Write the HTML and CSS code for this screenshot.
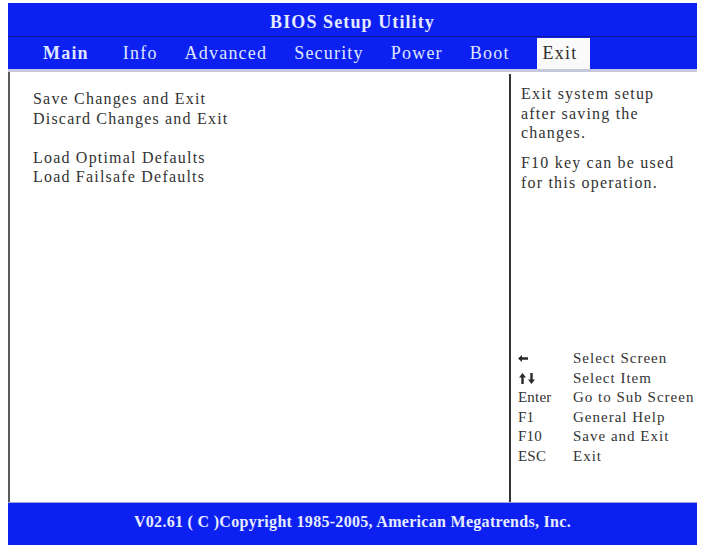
FILE: index.html
```html
<!DOCTYPE html>
<html lang="en">
<head>
<meta charset="utf-8">
<title>BIOS Setup Utility</title>
<link rel="stylesheet" href="styles.css">
</head>
<body>
<div class="screen">
  <header class="title-bar">BIOS Setup Utility</header>
  <nav class="menu">
    <span class="menu-item menu-item-strong">Main</span>
    <span class="menu-item">Info</span>
    <span class="menu-item">Advanced</span>
    <span class="menu-item">Security</span>
    <span class="menu-item">Power</span>
    <span class="menu-item">Boot</span>
    <span class="menu-item menu-item-active">Exit</span>
  </nav>
  <main class="content">
    <section class="options">
      <div class="option-group">
        <div class="option">Save Changes and Exit</div>
        <div class="option">Discard Changes and Exit</div>
      </div>
      <div class="option-group">
        <div class="option">Load Optimal Defaults</div>
        <div class="option">Load Failsafe Defaults</div>
      </div>
    </section>
    <aside class="help">
      <div class="help-text">
        <p class="help-para">Exit system setup<br>after saving the<br>changes.</p>
        <p class="help-para">F10 key can be used<br>for this operation.</p>
      </div>
      <div class="legend">
        <span class="key"><svg class="arrow-left" width="10" height="7" viewBox="0 0 10 7"><path d="M0 3.5 L4 0 L4 2.3 L10 2.3 L10 4.7 L4 4.7 L4 7 Z" fill="#2a2a2a"/></svg></span>
        <span class="action">Select Screen</span>
        <span class="key"><svg class="arrows-ud" width="16" height="11" viewBox="0 0 16 11"><path d="M3.5 0 L7 4.5 L4.7 4.5 L4.7 11 L2.3 11 L2.3 4.5 L0 4.5 Z" fill="#2a2a2a"/><path d="M12.5 11 L16 6.5 L13.7 6.5 L13.7 0 L11.3 0 L11.3 6.5 L9 6.5 Z" fill="#2a2a2a"/></svg></span>
        <span class="action">Select Item</span>
        <span class="key">Enter</span>
        <span class="action">Go to Sub Screen</span>
        <span class="key">F1</span>
        <span class="action">General Help</span>
        <span class="key">F10</span>
        <span class="action">Save and Exit</span>
        <span class="key">ESC</span>
        <span class="action">Exit</span>
      </div>
    </aside>
  </main>
  <footer class="status-bar">V02.61 ( C )Copyright 1985-2005, American Megatrends, Inc.</footer>
</div>
</body>
</html>
```

FILE: styles.css
```css
html, body {
  margin: 0;
  padding: 0;
  background: #ffffff;
}

body {
  font-family: "Liberation Serif", "Times New Roman", serif;
  color: #333333;
}

.screen {
  width: 689px;
  margin: 3px 0 0 8px;
  display: flex;
  flex-direction: column;
}

.title-bar {
  box-sizing: border-box;
  height: 34px;
  padding-top: 7px;
  line-height: 24px;
  background: #0c20f2;
  border-bottom: 1px solid #10189a;
  color: #e4eaff;
  font-weight: bold;
  font-size: 18px;
  letter-spacing: 1.1px;
  text-align: center;
}

.menu {
  box-sizing: border-box;
  height: 35px;
  display: flex;
  align-items: stretch;
  gap: 27px;
  padding-left: 35px;
  background: #0c20f2;
  border-bottom: 3px solid #c6c9db;
}

.menu-item {
  color: #dfe6ff;
  font-size: 18px;
  letter-spacing: 1.2px;
  line-height: 32px;
}

.menu-item-strong {
  font-weight: bold;
  margin-right: 7px;
}

.menu-item-active {
  margin-top: 1px;
  padding: 0 13px 0 6px;
  line-height: 30px;
  background: #fafafa;
  color: #2e2e2e;
}

.content {
  box-sizing: border-box;
  height: 430px;
  display: flex;
  background: #ffffff;
  border-left: 2px solid #5a5a5a;
}

.options {
  width: 499px;
  padding: 17px 0 0 23px;
  box-sizing: border-box;
  font-size: 16px;
  letter-spacing: 1.2px;
  line-height: 19.5px;
  color: #333333;
}

.option-group {
  margin-bottom: 19.5px;
}

.help {
  flex: 1;
  display: flex;
  flex-direction: column;
  border-left: 2px solid #333333;
  margin-top: 2px;
  padding: 10px 0 36px 0;
}

.help-text {
  padding-left: 10px;
  font-size: 16px;
  letter-spacing: 1.2px;
  line-height: 19.5px;
  color: #333333;
}

.help-para {
  margin: 0 0 10.5px 0;
}

.legend {
  margin-top: auto;
  padding-left: 7px;
  display: grid;
  grid-template-columns: 55px auto;
  font-size: 15px;
  letter-spacing: 1px;
  line-height: 19.5px;
  color: #333333;
}

.key {
  display: flex;
  align-items: center;
  letter-spacing: 0.2px;
}

.arrows-ud {
  margin-left: 1px;
}

.status-bar {
  box-sizing: border-box;
  height: 43px;
  padding-top: 9px;
  line-height: 20px;
  background: #0c20f2;
  border-top: 1px solid #9ca4de;
  color: #e6ecff;
  font-weight: bold;
  font-size: 16px;
  letter-spacing: 0.3px;
  text-align: center;
}
```
